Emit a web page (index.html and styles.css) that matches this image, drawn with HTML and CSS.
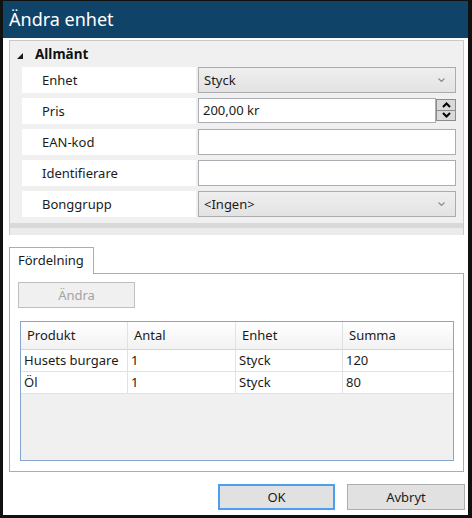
FILE: index.html
```html
<!DOCTYPE html>
<html>
<head>
  <title>Ändra enhet</title>
  <link rel="stylesheet" href="styles.css">
</head>
<body>

  <div class="dialog">
    <div class="titlebar">Ändra enhet</div>

    <div class="content">
      <div class="propgrid">
        <div class="category">
          <svg class="expander" width="6" height="6" viewBox="0 0 6 6"><polygon points="6,0 6,6 0,6" fill="#1a1a1a"/></svg>
          <span>Allmänt</span>
        </div>
        <div class="rows">
          <div class="prop-row">
            <div class="prop-label">Enhet</div>
            <div class="combo">
              <span>Styck</span>
              <svg width="7" height="4" viewBox="0 0 7 4"><polyline points="0.5,0.5 3.5,3.5 6.5,0.5" fill="none" stroke="#8a8a8a" stroke-width="1.1"/></svg>
            </div>
          </div>
          <div class="prop-row">
            <div class="prop-label">Pris</div>
            <div class="spin">
              <div class="textbox">200,00 kr</div>
              <div class="spin-buttons">
                <div class="spin-btn"><svg width="9" height="6" viewBox="0 0 9 6"><polyline points="1,5 4.5,1.5 8,5" fill="none" stroke="#000" stroke-width="2"/></svg></div>
                <div class="spin-btn"><svg width="9" height="6" viewBox="0 0 9 6"><polyline points="1,1 4.5,4.5 8,1" fill="none" stroke="#000" stroke-width="2"/></svg></div>
              </div>
            </div>
          </div>
          <div class="prop-row">
            <div class="prop-label">EAN-kod</div>
            <div class="textbox"></div>
          </div>
          <div class="prop-row">
            <div class="prop-label">Identifierare</div>
            <div class="textbox"></div>
          </div>
          <div class="prop-row">
            <div class="prop-label">Bonggrupp</div>
            <div class="combo">
              <span>&lt;Ingen&gt;</span>
              <svg width="7" height="4" viewBox="0 0 7 4"><polyline points="0.5,0.5 3.5,3.5 6.5,0.5" fill="none" stroke="#8a8a8a" stroke-width="1.1"/></svg>
            </div>
          </div>
        </div>
        <div class="grid-footer"></div>
      </div>

      <div class="tabs">
        <div class="tab-header">Fördelning</div>
        <div class="tab-body">
          <button class="btn btn-disabled" disabled>Ändra</button>
          <div class="table">
            <div class="table-row table-head">
              <div class="cell">Produkt</div>
              <div class="cell">Antal</div>
              <div class="cell">Enhet</div>
              <div class="cell">Summa</div>
            </div>
            <div class="table-row">
              <div class="cell">Husets burgare</div>
              <div class="cell">1</div>
              <div class="cell">Styck</div>
              <div class="cell">120</div>
            </div>
            <div class="table-row">
              <div class="cell">Öl</div>
              <div class="cell">1</div>
              <div class="cell">Styck</div>
              <div class="cell">80</div>
            </div>
          </div>
        </div>
      </div>

      <div class="actions">
        <button class="btn btn-default">OK</button>
        <button class="btn">Avbryt</button>
      </div>
    </div>
  </div>

</body>
</html>
```

FILE: styles.css
```css
* {
  box-sizing: border-box;
}
body {
  margin: 0;
  background-color: #fff;
  font-family: "Noto Sans", "Open Sans", sans-serif;
  font-size: 13px;
  color: #1b1b1b;
}
.dialog {
  width: 472px;
  height: 518px;
  border-top: 1px solid #111;
  border-left: 3px solid #111;
  border-right: 4px solid #111;
  border-bottom: 3px solid #111;
  background-color: #fff;
}
.titlebar {
  height: 37px;
  background-color: #0f4468;
  color: #fff;
  font-size: 18px;
  padding-left: 6px;
  line-height: 37px;
}
.content {
  padding: 2px 4px 0 6px;
}

/* property grid */
.propgrid {
  border: 1px solid #c9c9c9;
  border-bottom: none;
  background-color: #f0f0f0;
}
.category {
  height: 26px;
  display: flex;
  align-items: center;
  font-weight: bold;
  font-size: 13.5px;
  padding-left: 7px;
  color: #111;
}
.expander {
  margin-right: 12px;
  margin-top: 3px;
}
.rows {
  display: flex;
  flex-direction: column;
  gap: 5px;
  padding-left: 12px;
  padding-right: 6px;
}
.prop-row {
  display: grid;
  grid-template-columns: 174px 258px;
  column-gap: 2px;
  height: 26px;
}
.prop-label {
  background-color: #fff;
  padding-left: 20px;
  line-height: 26px;
}
.combo {
  display: flex;
  align-items: center;
  justify-content: space-between;
  border: 1px solid #acacac;
  background: linear-gradient(#efefef, #e3e3e3);
  padding: 0 10px 0 5px;
}
.textbox {
  border: 1px solid #abadb3;
  background-color: #fff;
  padding-left: 4px;
  line-height: 24px;
  height: 26px;
}
.spin {
  display: flex;
}
.spin .textbox {
  flex: 1;
  height: 25px;
  line-height: 23px;
}
.spin-buttons {
  width: 20px;
  height: 22px;
  margin-top: 1px;
  border: 1px solid #8c8c8c;
  display: flex;
  flex-direction: column;
}
.spin-btn {
  flex: 1;
  background-color: #d9d9d9;
  display: flex;
  align-items: center;
  justify-content: center;
}
.spin-btn + .spin-btn {
  border-top: 1px solid #8c8c8c;
}
.grid-footer {
  margin-top: 6px;
  height: 12px;
  border-top: 5px solid #d9d9d9;
  background-color: #ebebeb;
}

/* tabs */
.tabs {
  margin-top: 12px;
}
.tab-header {
  width: 85px;
  height: 27px;
  border: 1px solid #acacac;
  border-bottom: none;
  padding-left: 8px;
  line-height: 25px;
  background-color: #fff;
  position: relative;
  margin-bottom: -1px;
}
.tab-body {
  height: 199px;
  border: 1px solid #acacac;
  padding: 8px 9px 0 8px;
}

.btn {
  font-family: inherit;
  font-size: 13px;
  width: 117px;
  height: 26px;
  border: 1px solid #adadad;
  background-color: #e1e1e1;
  color: #1b1b1b;
  padding: 0;
}
.btn-disabled {
  background-color: #f0f0f0;
  border-color: #bfbfbf;
  color: #a3a3a3;
}
.btn-default {
  border: 2px solid #4aa0ef;
}

/* table */
.table {
  margin: 13px 0 0 2px;
  height: 140px;
  border: 1px solid #86a6cf;
  background-color: #f0f0f0;
}
.table-row {
  display: grid;
  grid-template-columns: 107px 108px 107px 1fr;
  height: 22px;
  background-color: #fff;
  border-bottom: 1px solid #e2e2e2;
}
.table-head {
  height: 28px;
  background: linear-gradient(#fff, #f2f2f2);
  border-bottom: 1px solid #d5d5d5;
}
.cell {
  border-right: 1px solid #e2e2e2;
  padding-left: 3px;
  line-height: 21px;
  white-space: nowrap;
}
.cell:last-child {
  border-right: none;
}
.table-head .cell {
  padding-left: 6px;
  line-height: 27px;
}

.actions {
  display: flex;
  justify-content: flex-end;
  gap: 12px;
  margin-top: 12px;
}
.actions .btn:last-child {
  width: 118px;
  margin-right: -1px;
}
```
